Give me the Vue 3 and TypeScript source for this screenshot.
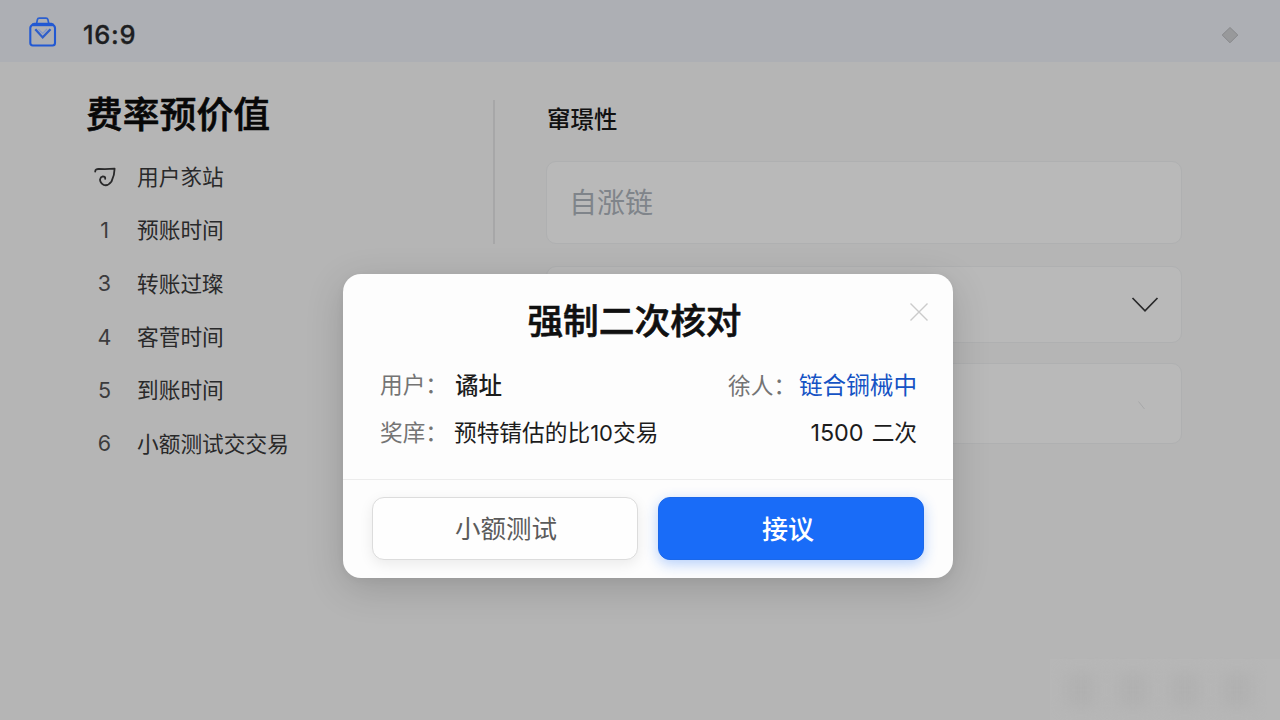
<script setup lang="ts">
interface Step {
  mark: string
  label: string
}

const steps: Step[] = [
  { mark: '', label: '用户㒸站' },
  { mark: '1', label: '预账时间' },
  { mark: '3', label: '转账过璨' },
  { mark: '4', label: '客菅时间' },
  { mark: '5', label: '到账时间' },
  { mark: '6', label: '小额测试交交易' },
]
</script>

<template>
  <div class="page">
    <header class="topbar">
      <svg class="logo" width="30" height="32" viewBox="0 0 30 32" fill="none">
        <path d="M8.4 8.5 9.4 3.6Q9.7 2.2 11.2 2.2H18Q19.5 2.2 19.9 3.6L21 8.5" stroke="#2b5fd0" stroke-width="1.7" />
        <path d="M2.300 12Q2.300 9.500 6 7.900H23.500Q27 9.500 27 12V27Q27 29.500 24.500 29.500H4.800Q2.300 29.500 2.300 27Z" stroke="#2259d3" stroke-width="2.1" />
        <path d="M4 8.800H25.500" stroke="#2259d3" stroke-width="2.8" />
        <path d="M7.300 13.2 14.700 21.4 22.5 13.2" stroke="#2f5fca" stroke-width="2.3" />
        <path d="M10.500 13.300 14.700 17.5 19 13" stroke="#8197cb" stroke-width="1.200" />
      </svg>
      <span class="brand">16:9</span>
      <svg class="gem" width="18" height="18" viewBox="0 0 18 18">
        <path d="M9 1.500 16.800 9 9 16.800 1.200 9Z" fill="#98999b" stroke="#88898c" stroke-width="1" />
      </svg>
    </header>

    <main class="body">
      <section class="side">
        <h1>费率预价值</h1>
        <ul>
          <li v-for="s in steps" :key="s.label">
            <span class="mark">
              <svg v-if="!s.mark" width="24" height="22" viewBox="0 0 24 22" fill="none" stroke="#29292a" stroke-width="1.8" stroke-linecap="round" stroke-linejoin="round">
                <path d="M2.200 5.500Q2.300 2.800 6 3Q14 3.400 21.600 2.700Q21.600 9 18.500 15.500Q15 20.300 10.800 19Q7 17 7 13.600Q7.400 11 9.800 10.400Q12.500 10.400 12.200 12.800" />
              </svg>
              <template v-else>{{ s.mark }}</template>
            </span>
            <span class="label">{{ s.label }}</span>
          </li>
        </ul>
      </section>
      <div class="divider"></div>
      <section class="form">
        <h2>窜璟性</h2>
        <div class="field first">自涨链</div>
        <div class="field second">
          <svg width="28" height="18" viewBox="0 0 28 18" fill="none"><path d="M1.500 2 14 14.800 26.500 2" stroke="#29292a" stroke-width="1.700" /></svg>
        </div>
        <div class="field third">
          <svg width="10" height="12" viewBox="0 0 10 12" fill="none"><path d="M1.500 1.500 7.500 9" stroke="#a7a8a9" stroke-width="1" /></svg>
        </div>
      </section>
    </main>

    <div class="ghost"><i></i><i></i><i></i><i></i></div>

    <div class="overlay">
      <div class="dialog">
        <div class="content">
          <svg class="close" width="20" height="20" viewBox="0 0 20 20"><path d="M1.500 1.500 18.500 18.500M18.500 1.500 1.500 18.500" stroke="#cbcbcb" stroke-width="1.400" /></svg>
          <h3>强制二次核对</h3>
          <div class="row">
            <span class="key">用户：</span><span class="val strong">谲址</span>
            <span class="right"><span class="key">徐人：</span><span class="link">链合锎械中</span></span>
          </div>
          <div class="row">
            <span class="key">奖庠：</span><span class="val">预特锖估的比<span class="num">10</span>交易</span>
            <span class="right"><span class="amount">1500</span> 二次</span>
          </div>
        </div>
        <div class="actions">
          <button class="ghost-btn">小额测试</button>
          <button class="primary">接议</button>
        </div>
      </div>
    </div>
  </div>
</template>

<style>
body {
  margin: 0;
}
</style>

<style scoped>
.page {
  position: relative;
  width: 1280px;
  height: 720px;
  overflow: hidden;
  background: #b5b5b5;
  color: #29292a;
  font-family: "Noto Sans CJK SC", sans-serif;
}
.topbar {
  display: flex;
  align-items: center;
  box-sizing: border-box;
  height: 62px;
  padding: 7px 41px 0 28px;
  background: #adafb4;
}
.brand {
  margin-left: 25px;
  font: 500 25.500px/30px Inter, sans-serif;
  letter-spacing: .7px;
  color: #1d1e21;
  -webkit-text-stroke: .3px #1d1e21;
}
.logo {
  margin-top: -6px;
}
.gem {
  margin-left: auto;
}
.body {
  display: flex;
  padding: 32px 0 0 86px;
}
.side {
  width: 407px;
}
h1,
h2,
h3,
ul {
  margin: 0;
  padding: 0;
}
h1 {
  height: 40px;
  font-size: 36.8px;
  line-height: 36px;
  font-weight: 500;
  color: #080808;
  -webkit-text-stroke: .6px #080808;
}
ul {
  margin-top: 16px;
  list-style: none;
}
li {
  display: flex;
  align-items: center;
  height: 53.3px;
  font-size: 21.700px;
  white-space: nowrap;
}
.label {
  padding-bottom: 2px;
}
.mark {
  display: flex;
  justify-content: center;
  width: 37px;
  margin-right: 14px;
  font: 400 21.500px/28px Inter, sans-serif;
  color: #3c3c3d;
}
.divider {
  width: 2px;
  height: 144px;
  margin-top: 6px;
  background: #a7a7a8;
}
.form {
  width: 636px;
  margin-left: 51px;
}
h2 {
  height: 30px;
  margin-top: 11px;
  padding-left: 1px;
  font-size: 23.500px;
  line-height: 27px;
  font-weight: 500;
  color: #111;
}
.field {
  display: flex;
  align-items: center;
  box-sizing: border-box;
  border: 1px solid #afb0b1;
  border-radius: 10px;
  background: #b9b9b9;
}
.first {
  height: 83px;
  margin-top: 26px;
  padding: 0 0 3px 22px;
  font-size: 28px;
  color: #7f848a;
}
.second {
  justify-content: flex-end;
  height: 77px;
  margin-top: 22px;
  padding-right: 22px;
}
.third {
  justify-content: flex-end;
  height: 81px;
  margin-top: 20px;
  padding: 5px 34px 0 0;
}
.ghost {
  position: absolute;
  left: 1050px;
  top: 659px;
  display: flex;
  align-items: center;
  gap: 20px;
  box-sizing: border-box;
  width: 230px;
  height: 61px;
  padding-left: 15px;
  background: #b7b7b7;
}
.ghost i {
  width: 32px;
  height: 34px;
  background: #b1b1b1;
  filter: blur(7px);
}
.overlay {
  position: absolute;
  inset: 0;
  display: flex;
  align-items: flex-start;
  padding: 274px 0 0 343px;
}
.dialog {
  width: 610px;
  height: 304px;
  border-radius: 18px;
  background: #fdfdfd;
  box-shadow: 0 10px 38px rgba(0, 0, 0, .16), 0 2px 8px rgba(0, 0, 0, .04);
}
.content {
  position: relative;
  box-sizing: border-box;
  height: 206px;
  padding: 23px 36px 0 37px;
  border-bottom: 1px solid #ececec;
}
.close {
  position: absolute;
  right: 24px;
  top: 28px;
}
h3 {
  height: 44px;
  margin-bottom: 19px;
  padding-right: 28px;
  text-align: center;
  font-size: 35.700px;
  line-height: 44px;
  font-weight: 500;
  color: #101010;
  -webkit-text-stroke: .6px #101010;
}
.row {
  display: flex;
  align-items: center;
  height: 47.500px;
  font-size: 22.700px;
  white-space: nowrap;
  color: #1c1c1c;
}
.key {
  width: 74px;
  color: #747474;
}
.strong {
  padding-left: 1px;
  font-size: 23.500px;
  font-weight: 500;
}
.right {
  display: flex;
  align-items: baseline;
  gap: 8px;
  margin-left: auto;
}
.right .key {
  width: 63px;
}
.link {
  font-size: 23.600px;
  color: #1553c4;
}
.num {
  font-family: Inter, sans-serif;
  font-size: 22px;
}
.amount {
  font: 400 23.400px/30px Inter, sans-serif;
}
.actions {
  display: flex;
  gap: 20px;
  padding: 17px 29px 0;
}
button {
  box-sizing: border-box;
  width: 266px;
  height: 63px;
  padding: 0 0 4px 2px;
  border: 1px solid #dcdcdc;
  border-radius: 12px;
  background: #fefefe;
  font-family: inherit;
  font-size: 25.500px;
  color: #5b5b5b;
  box-shadow: 0 4px 14px rgba(0, 0, 0, .08);
}
.primary {
  border-color: #1b68ea;
  background: #196cf8;
  color: #fff;
  font-weight: 500;
  font-size: 26px;
  padding: 0 6px 3px 0;
  box-shadow: 0 4px 14px rgba(25, 108, 248, .32);
}
</style>
